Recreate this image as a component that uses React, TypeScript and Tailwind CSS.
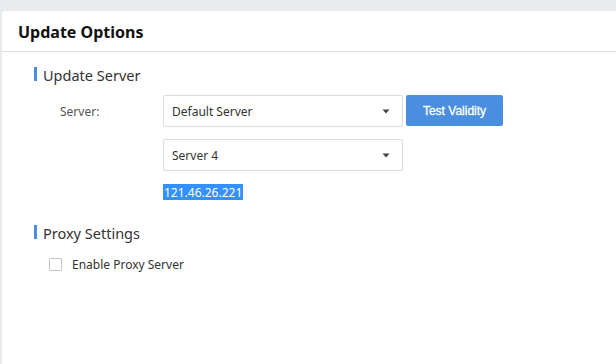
import React from "react";

function Caret() {
  return (
    <svg width="8" height="5" viewBox="0 0 8 5" className="mr-[12px]">
      <path d="M0.5 0.5 L7.5 0.5 L4 4.5 Z" fill="#444" />
    </svg>
  );
}

function Select({ value }: { value: string }) {
  return (
    <div className="w-[240px] h-[32px] border border-[#dcdcdc] rounded-[2px] bg-white flex items-center justify-between pl-[8px]">
      <span className="text-[12px] text-[#333] leading-[16px] pt-[2px]">{value}</span>
      <Caret />
    </div>
  );
}

function SectionTitle({ children }: { children: React.ReactNode }) {
  return (
    <div className="flex items-center h-[20px]">
      <div className="w-[3px] h-[14px] bg-[#4a8fdf]" />
      <span className="ml-[6px] text-[14.5px] text-[#333] leading-[20px] pt-[1px]">{children}</span>
    </div>
  );
}

export default function App() {
  return (
    <div className="h-[364px] bg-[#e9ecef] pt-[11px] pl-[2px] flex flex-col font-['Noto_Sans',sans-serif] overflow-hidden">
      <div className="flex-1 bg-white rounded-tl-[3px] flex flex-col">
        <div className="h-[41px] border-b border-[#dedede] flex items-center pl-[16px]">
          <h1 className="text-[16px] font-bold text-[#111] leading-[20px] pt-[2px]">Update Options</h1>
        </div>
        <div className="pl-[32px] pt-[12px]">
          <SectionTitle>Update Server</SectionTitle>
          <div className="mt-[11px] flex items-center h-[32px]">
            <div className="w-[129px] pl-[26px] text-[12px] text-[#555] leading-[16px] pt-[2px]">Server:</div>
            <Select value="Default Server" />
            <button className="ml-[3px] w-[97px] h-[31px] self-start bg-[#4a8fdf] rounded-[2px] text-white text-[12px] font-['Liberation_Sans',Arial,sans-serif] [-webkit-text-stroke:0.3px_white]">
              Test Validity
            </button>
          </div>
          <div className="mt-[12px] flex items-center h-[32px] pl-[129px]">
            <Select value="Server 4" />
          </div>
          <div className="mt-[13px] pl-[129px] flex">
            <span className="bg-[#3390ff] text-white text-[12px] leading-[15px] px-[1px] pt-[1px]">121.46.26.221</span>
          </div>
          <div className="mt-[22px]">
            <SectionTitle>Proxy Settings</SectionTitle>
          </div>
          <div className="mt-[15px] flex items-center h-[14px] pl-[15px]">
            <div className="w-[13px] h-[13px] border border-[#c4c4c4] rounded-[1px] bg-white" />
            <span className="ml-[10px] text-[12px] text-[#333] leading-[16px] pt-[2px]">Enable Proxy Server</span>
          </div>
        </div>
      </div>
    </div>
  );
}
